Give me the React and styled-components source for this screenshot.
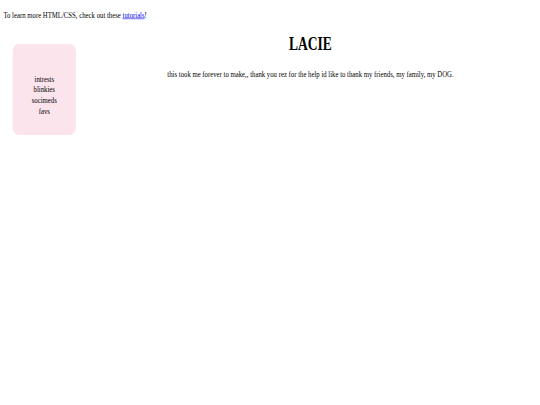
import React from 'react'
import styled, { createGlobalStyle } from 'styled-components'

// the reference is a 1280x720 page squeezed into 540x405,
// so the page is laid out at full size and scaled down as a whole
const SCALE_X = 540 / 1280
const SCALE_Y = 405 / 720

const GlobalStyle = createGlobalStyle`
    html, body {
        margin: 0;
        padding: 0;
        background: #ffffff;
        overflow: hidden;
    }
`

const Frame = styled.div`
    width: 540px;
    height: 405px;
    overflow: hidden;
`

const Viewport = styled.div`
    box-sizing: border-box;
    width: 1280px;
    height: 720px;
    padding: 2px 8px 8px;
    transform: scale(${ SCALE_X }, ${ SCALE_Y });
    transform-origin: 0 0;
    font-family: "Liberation Serif", "Times New Roman", serif;
    font-size: 16px;
    color: #000000;
`

const Intro = styled.p`
    margin: 16px 0;
`

const TutorialLink = styled.a`
    color: #0000ee;
    text-decoration: underline;
`

const Layout = styled.div`
    display: flex;
    flex-direction: row;
    align-items: flex-start;
`

const Sidebar = styled.nav`
    box-sizing: border-box;
    flex: 0 0 150px;
    height: 162px;
    margin: 26px 0 0 22px;
    padding-top: 52px;
    background: #fce4ec;
    border-radius: 14px;
    text-align: center;
    line-height: 19px;
`

const SideItem = styled.div``

const Main = styled.main`
    flex: 1;
    margin-left: 20px;
    text-align: center;
`

const Title = styled.h1`
    margin: 8px 0 0;
    font-size: 32px;
    font-weight: bold;
`

const Blurb = styled.p`
    margin: 25px 0 0;
`

const items = ['intrests', 'blinkies', 'socimeds', 'favs']

export default function App() {
    return (
        <>
            <GlobalStyle />
            <Frame>
                <Viewport>
                    <Intro>
                        To learn more HTML/CSS, check out these <TutorialLink href="#">tutorials</TutorialLink>!
                    </Intro>
                    <Layout>
                        <Sidebar>
                            { items.map(item => <SideItem key={ item }>{ item }</SideItem>) }
                        </Sidebar>
                        <Main>
                            <Title>LACIE</Title>
                            <Blurb>
                                this took me forever to make,, thank you rez for the help id like to thank my friends, my family, my DOG.
                            </Blurb>
                        </Main>
                    </Layout>
                </Viewport>
            </Frame>
        </>
    )
}
